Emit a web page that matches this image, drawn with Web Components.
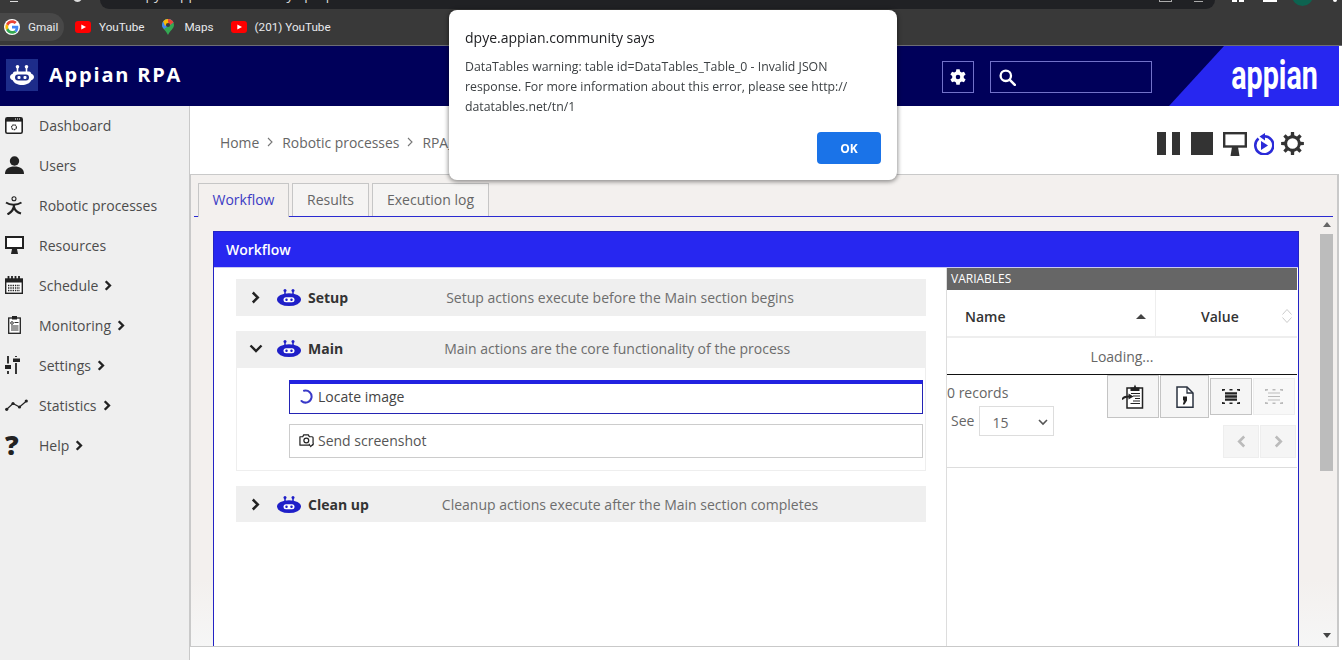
<!DOCTYPE html>
<html lang="en"><head><meta charset="utf-8"><title>Appian RPA</title>
<style>
html,body{margin:0;padding:0;height:660px;overflow:hidden;background:#fff;font-family:"Open Sans","Noto Sans",sans-serif}
</style></head><body>
<rpa-page>
  <browser-bar slot="chrome">
    <bm-item icon="google" active>Gmail</bm-item>
    <bm-item icon="yt">YouTube</bm-item>
    <bm-item icon="maps">Maps</bm-item>
    <bm-item icon="yt">(201) YouTube</bm-item>
  </browser-bar>
  <app-header slot="header"></app-header>
  <side-nav slot="nav">
    <nav-item icon="dash">Dashboard</nav-item>
    <nav-item icon="user">Users</nav-item>
    <nav-item icon="robotic">Robotic processes</nav-item>
    <nav-item icon="monitor">Resources</nav-item>
    <nav-item icon="calendar" more>Schedule</nav-item>
    <nav-item icon="clip" more>Monitoring</nav-item>
    <nav-item icon="sliders" more>Settings</nav-item>
    <nav-item icon="stats" more>Statistics</nav-item>
    <nav-item icon="help" more>Help</nav-item>
  </side-nav>
  <crumb-bar slot="crumbs"></crumb-bar>
  <work-area slot="work">
    <workflow-panel>
      <section-row title="Setup" desc="Setup actions execute before the Main section begins" gap="98"></section-row>
      <section-row title="Main" desc="Main actions are the core functionality of the process" gap="101" nudge open>
        <action-item icon="spinner" active>Locate image</action-item>
        <action-item icon="camera">Send screenshot</action-item>
      </section-row>
      <section-row title="Clean up" desc="Cleanup actions execute after the Main section completes" gap="73" short></section-row>
      <vars-panel slot="side"></vars-panel>
    </workflow-panel>
  </work-area>
</rpa-page>
<alert-dialog origin="dpye.appian.community says">DataTables warning: table id=DataTables_Table_0 - Invalid JSON response. For more information about this error, please see http:// datatables.net/tn/1</alert-dialog>
<script>
function gearPath(c,ro,ri,h,n,root,tip){root=root||.34;tip=tip||.2;let d='';const s=Math.PI*2/n;for(let i=0;i<n;i++){const a=i*s-Math.PI/2;const P=(r,t)=>(c+r*Math.cos(t)).toFixed(2)+' '+(c+r*Math.sin(t)).toFixed(2);
d+=(i?'L':'M')+P(ri,a-s*root)+'L'+P(ro,a-s*tip)+'L'+P(ro,a+s*tip)+'L'+P(ri,a+s*root);}
return d+`ZM${c-h} ${c}a${h} ${h} 0 1 0 ${2*h} 0a${h} ${h} 0 1 0 ${-2*h} 0Z`;}
const D='#222';
const ICONS={
dash:[18,17,'0 0 18 17',`<rect x=".8" y=".8" width="16.4" height="15.4" rx="1.5" fill="#fff" stroke="${D}" stroke-width="1.6"/><rect x="1" y="1" width="16" height="3.6" fill="${D}"/><path d="M10 2h1M12 2h1M14 2h1" stroke="#fff"/><circle cx="9" cy="10.2" r="2.4" fill="none" stroke="#333" stroke-width="1.3" stroke-dasharray="1.6 .5"/>`],
user:[19,18,'0 0 19 18',`<circle cx="9.5" cy="5" r="4.7" fill="${D}"/><path d="M0 18c0-5.5 4-7.5 9.5-7.5S19 12.5 19 18z" fill="${D}"/>`],
robotic:[17,19,'0 0 17 19',`<circle cx="9" cy="2.8" r="2" fill="none" stroke="${D}" stroke-width="1.1"/><path d="M1 6.5C5 9.5 12 9.5 16.5 6.5" fill="none" stroke="${D}" stroke-width="2"/><path d="M9 8.5C9.5 13 6.5 16 2.5 18.5M9 11C10 15 12.5 16.5 16 17.5" fill="none" stroke="${D}" stroke-width="2.2"/>`],
monitor:[19,18,'0 0 19 18',`<rect x="1" y="1" width="17" height="11" fill="#fff" stroke="${D}" stroke-width="2"/><path d="M7 13h5l1 5H6z" fill="${D}"/>`],
calendar:[18,18,'0 0 18 18',`<rect x=".7" y="3" width="16.6" height="14.3" fill="#fff" stroke="${D}" stroke-width="1.4"/><path d="M1 3h16v3.5H1z" fill="${D}"/><path d="M3.5 0v4M7 0v4M10.5 0v4M14 0v4" stroke="${D}" stroke-width="1.8"/><path d="M3 9.5h12M3 12h12M3 14.5h12" stroke="${D}" stroke-width="1.4" stroke-dasharray="1.4 .9"/>`],
clip:[13,18,'0 0 13 18',`<rect x=".7" y="2" width="11.6" height="15.3" fill="#fff" stroke="${D}" stroke-width="1.3"/><rect x="4" y="0" width="5" height="3.5" fill="${D}"/><circle cx="4" cy="7" r="1.3" fill="none" stroke="#333"/><path d="M6.5 6.5h4M3 10h7.5M3 12h7.5M3 14h7.5" stroke="#333"/>`],
sliders:[15,18,'0 0 15 18',`<path d="M3 0v7.5M3 15v3M11 0v1M11 7v11" stroke="${D}" stroke-width="1.8"/><rect x="0" y="9" width="6" height="4" fill="${D}"/><rect x="8" y="2.5" width="7" height="3.5" fill="${D}"/>`],
stats:[23,12,'0 0 23 12',`<path d="M1.5 10.5L8 4.5l6.5 3.500L21.5 2" fill="none" stroke="${D}" stroke-width="1.2"/><circle cx="1.7" cy="10.3" r="1.6" fill="${D}"/><circle cx="8" cy="4.5" r="1.6" fill="${D}"/><circle cx="14.5" cy="8" r="1.6" fill="${D}"/><circle cx="21.3" cy="2" r="1.6" fill="${D}"/>`],
gearw:[16,16,'0 0 24 24',`<path fill="#fff" fill-rule="evenodd" d="${gearPath(12,12,8.8,3.4,6)}"/>`],
search:[17,17,'0 0 17 17',`<circle cx="6.8" cy="6.8" r="5.2" fill="none" stroke="#fff" stroke-width="2.3"/><path d="M10.8 10.8l5 5" stroke="#fff" stroke-width="2.6" stroke-linecap="round"/>`],
pause:[23,23,'0 0 23 23',`<rect width="9" height="23" fill="#333"/><rect x="15" width="8" height="23" fill="#333"/>`],
stop:[22,23,'0 0 22 23',`<rect width="22" height="23" fill="#333"/>`],
monitorL:[24,24,'0 0 24 24',`<rect x="1.2" y="1.2" width="21.6" height="13.3" fill="#fff" stroke="#333" stroke-width="2.4"/><path d="M9 15h6l1.5 9h-9z" fill="#333"/>`],
replay:[21,22,'0 0 21 22',`<path d="M5.5 5.4A9 9 0 1 0 11 3.3" fill="none" stroke="#2a2ad8" stroke-width="2.6"/><path d="M12 0v7.5L6.5 3.500z" fill="#2a2ad8"/><path d="M8 8l7 4.5L8 17z" fill="#2a2ad8"/>`],
gearL:[23,23,'0 0 24 24',`<path fill="#333" fill-rule="evenodd" d="${gearPath(12,12,8.7,5.6,8,.27,.18)}"/>`],
botw:[24,20,'0 0 24 20',`<circle cx="7.5" cy="1.8" r="1.8" fill="#fff"/><circle cx="16.5" cy="1.8" r="1.8" fill="#fff"/><path d="M7.5 2v5M16.5 2v5" stroke="#fff" stroke-width="1.6"/><path d="M5 6.5h14c1.5 0 2 1.6 2.3 2.2 1.6.3 2.7 1.8 2.7 3.3s-1.1 3-2.7 3.3C20 18.5 16 20 12 20s-8-1.5-9.3-4.7C1.1 15 0 13.5 0 12s1.1-3 2.7-3.3C3 8.1 3.5 6.5 5 6.5z" fill="#fff"/><rect x="5" y="9.5" width="14" height="6" rx="3" fill="#1d2c8a"/><rect x="7.5" y="11" width="3" height="3" rx="1" fill="#fff"/><rect x="13.5" y="11" width="3" height="3" rx="1" fill="#fff"/>`],
bot:[24,17,'0 0 24 17',`<circle cx="8" cy="1.5" r="1.5" fill="#1f1fc8"/><circle cx="16" cy="1.5" r="1.5" fill="#1f1fc8"/><path d="M8 2v4M16 2v4" stroke="#1f1fc8" stroke-width="1.5"/><ellipse cx="12" cy="10.6" rx="12" ry="6.4" fill="#1f1fc8"/><rect x="6.5" y="8.3" width="11" height="5" rx="2.5" fill="#fff"/><rect x="8.3" y="9.6" width="2.4" height="2.4" rx="1" fill="#1f1fc8"/><rect x="13.3" y="9.6" width="2.4" height="2.4" rx="1" fill="#1f1fc8"/>`],
spinner:[15,15,'0 0 15 15',`<path d="M5 1.8A6 6 0 1 1 2.500 12" fill="none" stroke="#3838c8" stroke-width="2" stroke-linecap="round"/>`],
camera:[15,15,'0 0 16 15',`<path d="M1 3.5h3l1-2h5l1 2h3a1 1 0 0 1 1 1v7a1 1 0 0 1-1 1H1z" fill="#fff" stroke="#222" stroke-width="1.3" stroke-linejoin="round"/><circle cx="7.8" cy="7.5" r="2.6" fill="none" stroke="#222" stroke-width="1.3"/><path d="M10.5 11l2 3 3-3.500" fill="#fff" stroke="#222" stroke-width="1.1"/>`],
paste:[22,25,'0 0 22 25',`<rect x="5" y="4" width="15.5" height="20" fill="#fff" stroke="#222" stroke-width="1.5"/><path d="M8.5 7V3.500h3.200L13 .5l1.300 3h3.200V7z" fill="#222"/><path d="M9 9.5h9M11 12h7M13 14.5h5M11 17h7M8.500 19.500h9.500" stroke="#222" stroke-width="1.2"/><path d="M0 15.500c1-2 3-3 7-3" fill="none" stroke="#222" stroke-width="1.8"/><path d="M6.500 9.500l5 3-5 3z" fill="#222"/>`],
csv:[18,22,'0 0 18 22',`<path d="M1 1h10l6 6v14.300H1z" fill="#fff" stroke="#2b3340" stroke-width="1.5"/><path d="M11 1v6h6" fill="none" stroke="#2b3340" stroke-width="1.3"/><path d="M7 10.500h4v4L8.500 18.500H6.800l1.200-4H7z" fill="#222"/>`],
collapse:[18,15,'0 0 18 15',`<path d="M3 3.200h12v2.400H3zM3 6.300h12v2.400H3zM3 9.400h12v2.400H3z" fill="#222"/><path d="M0 .8h18M0 14.200h18" stroke="#222" stroke-width="1.6" stroke-dasharray="3 4.500"/><path d="M.8 0v15M17.200 0v15" stroke="#222" stroke-width="1.4" stroke-dasharray="2 11 2"/>`],
expand:[18,15,'0 0 18 15',`<path d="M3 3.500h12v1H3zM3 7h12v1H3zM3 10.500h12v1H3z" fill="#bbb"/><path d="M0 .8h18M0 14.200h18" stroke="#bbb" stroke-width="1.4" stroke-dasharray="3 4.500"/><path d="M.8 0v15M17.200 0v15" stroke="#bbb" stroke-width="1.4" stroke-dasharray="2 11 2"/>`],
chevR:[9,13,'0 0 9 13',`<path d="M1.800 1.500l5 5-5 5" fill="none" stroke="#222" stroke-width="2.5"/>`],
chevS:[8,11,'0 0 9 13',`<path d="M1.800 1.500l5 5-5 5" fill="none" stroke="#222" stroke-width="2.8"/>`],
chevD:[14,9,'0 0 14 9',`<path d="M1.500 1.500L7 7l5.500-5.500" fill="none" stroke="#222" stroke-width="2.4"/>`],
chevRg:[9,13,'0 0 9 13',`<path d="M1.800 1.500l5 5-5 5" fill="none" stroke="#bbb" stroke-width="2.6"/>`],
chevLg:[9,13,'0 0 9 13',`<path d="M7.200 1.500l-5 5 5 5" fill="none" stroke="#bbb" stroke-width="2.6"/>`],
google:[16,16,'0 0 48 48',`<circle cx="24" cy="24" r="24" fill="#fff"/><path fill="#ea4335" d="M24 12c3.200 0 6 1.100 8.200 3.200l5.900-5.900C34.400 5.800 29.600 4 24 4 16.200 4 9.500 8.500 6.200 15l6.900 5.300C14.700 15.500 19 12 24 12z"/><path fill="#4285f4" d="M43 24.500c0-1.400-.1-2.700-.4-4H24v7.700h10.700c-.5 2.500-1.900 4.600-4 6l6.700 5.200c3.900-3.600 5.600-8.900 5.600-14.900z"/><path fill="#fbbc05" d="M13.100 28.300c-.9-2.700-.9-5.500 0-8L6.200 15c-2.900 5.700-2.900 12.300 0 18z"/><path fill="#34a853" d="M24 44c5.400 0 9.900-1.800 13.400-4.600l-6.700-5.200c-1.800 1.200-4 1.900-6.700 1.900-5 0-9.300-3.500-10.900-8.100L6.200 33C9.500 39.500 16.200 44 24 44z"/>`],
yt:[16,12,'0 0 16 12',`<rect width="16" height="12" rx="3" fill="#f00"/><path d="M6.300 3.500L11 6 6.300 8.500z" fill="#fff"/>`],
maps:[12,16,'0 0 12 16',`<path d="M6 0a6 6 0 0 1 6 6c0 3.500-4 5.500-6 10C4 11.500 0 9.500 0 6a6 6 0 0 1 6-6z" fill="#34a853"/><path d="M6 0a6 6 0 0 1 5.500 3.500L2 10C1 8.800 0 7.600 0 6a6 6 0 0 1 6-6z" fill="#4285f4"/><path d="M1.200 2.400A6 6 0 0 1 6 0l1 4-4 3z" fill="#fbbc05"/><path d="M6 0a6 6 0 0 1 5.500 3.500L8 6 6 3z" fill="#ea4335"/><circle cx="6" cy="6" r="2.100" fill="#3a3a3a"/>`]
};
function svg(n){const i=ICONS[n];return i?`<svg width="${i[0]}" height="${i[1]}" viewBox="${i[2]}" aria-hidden="true">${i[3]}</svg>`:'';}
function def(name,css,html){customElements.define(name,class extends HTMLElement{constructor(){super();this.attachShadow({mode:'open'});}
connectedCallback(){if(this._r)return;this._r=1;const h=typeof html==='function'?html(this):html;this.shadowRoot.innerHTML=`<style>${css}</style>${h}`;}});}

def('rpa-page',`:host{display:flex;flex-direction:column;height:660px;width:1342px;overflow:hidden}
.body{display:flex;height:554px;padding-right:3px;box-sizing:border-box}
.nav{flex:none;width:190px}.main{flex:1;display:flex;flex-direction:column;min-width:0}`,
`<slot name="chrome"></slot><slot name="header"></slot><div class="body"><div class="nav"><slot name="nav"></slot></div><div class="main"><slot name="crumbs"></slot><slot name="work"></slot></div></div>`);

def('browser-bar',`:host{display:block;background:#393939;color:#e8eaed;border-bottom:1px solid #6d6d75;font:11.7px Roboto,sans-serif}
.top{height:9px;position:relative;overflow:hidden;display:flex;padding-left:100px}
.url{width:1115px;height:9px;background:#202124;border-radius:0 0 12px 12px;overflow:hidden;box-sizing:border-box;padding-left:37px;color:#ddd;font:13.5px/16px "Open Sans",sans-serif}
.url span{display:block;margin-top:-13px;white-space:nowrap;letter-spacing:.2px}
.tools{position:absolute;top:0;left:0;right:0;height:9px}
.tools i{position:absolute;display:block}
.bm{height:36px;display:flex;align-items:center;gap:17px;box-sizing:border-box}`,
`<div class="top"><div class="url"><span>dpye.appian.community/rpa/p/</span></div><div class="tools">
<i style="left:10px;top:-3px;width:8px;height:4px;border-bottom:1px solid #ddd"></i>
<i style="left:72px;top:-11px;width:11px;height:13px;background:#ddd;border-radius:50%"></i>
<i style="left:1159px;top:-6px;width:11px;height:7px;border:1px solid #aaa;border-top:0"></i>
<i style="left:1194px;top:-3px;width:9px;height:4px;border-bottom:1px solid #aaa"></i>
<i style="left:1232px;top:-6px;width:5px;height:8px;background:#fff"></i><i style="left:1239px;top:-6px;width:5px;height:8px;background:#fff"></i>
<i style="left:1263px;top:-6px;width:14px;height:8px;background:#fff"></i>
<i style="left:1292px;top:-15px;width:21px;height:21px;background:#0d6350;border-radius:50%"></i>
<i style="left:1333px;top:-2px;width:4px;height:4px;background:#fff;border-radius:50%"></i>
</div></div><div class="bm"><slot></slot></div>`);

def('bm-item',`:host{display:flex;align-items:center;height:28px;gap:8px;white-space:nowrap}
:host([active]){background:#484848;box-sizing:border-box;width:64px;padding-left:4px;border-radius:0 14px 14px 0;margin-right:-6px}
:host([icon=maps]){gap:10px;margin-left:1px}
svg{display:block;flex:none}`,
h=>`${svg(h.getAttribute('icon'))}<slot></slot>`);

def('app-header',`:host{display:flex;align-items:stretch;height:60px;margin-right:3px;background:#00005a;color:#fff}
.logo{flex:none;display:flex;align-items:center;justify-content:center;width:32px;height:32px;margin:13px 0 0 6px;background:#1d2c8a}
.brand{flex:none;margin-left:11px;font:700 20px/58px "Open Sans",sans-serif;letter-spacing:1.8px;white-space:nowrap}
.sp{flex:1}
.box{flex:none;display:flex;align-items:center;box-sizing:border-box;height:32px;margin-top:15px;border:1px solid #7171c9}
.gear{width:32px;justify-content:center}.search{width:162px;margin-left:16px;padding-left:8px}
.brandblock{flex:none;margin-left:17px;width:170px;background:#2727f0;clip-path:polygon(55px 0,100% 0,100% 100%,0 100%);overflow:hidden;display:flex;justify-content:flex-end}
.ap{font:700 41px/58px Roboto,sans-serif;transform:scaleX(.7);transform-origin:100% 50%;margin-right:21px;white-space:nowrap}`,
`<div class="logo">${svg('botw')}</div><div class="brand">Appian RPA</div><div class="sp"></div>
<div class="box gear">${svg('gearw')}</div><div class="box search">${svg('search')}</div>
<div class="brandblock"><span class="ap">appian</span></div>`);

def('side-nav',`:host{display:block;height:100%;box-sizing:border-box;width:190px;background:#efefef;border-right:1px solid #c9c9c9}`,`<slot></slot>`);

def('nav-item',`:host{display:flex;align-items:center;box-sizing:border-box;height:40px;padding-bottom:2px;font:14px "Open Sans",sans-serif;color:#4c4c4c;white-space:nowrap}
.ic{flex:none;width:34px;margin-left:5px;display:flex;align-items:center}
.ic.c{padding-left:3px;width:31px}.more{display:flex;margin-left:6px}
.q{font:800 27px/1 "Open Sans",sans-serif;color:#222;margin-top:-1px}`,
h=>{const n=h.getAttribute('icon');return `<span class="ic ${n==='clip'?'c':''}">${n==='help'?'<span class="q">?</span>':svg(n)}</span><slot></slot>${h.hasAttribute('more')?`<span class="more">${svg('chevS')}</span>`:''}`;});

def('crumb-bar',`:host{display:flex;align-items:center;flex:none;height:68px;padding:4px 0 0 30px;box-sizing:border-box;font:13.9px "Open Sans",sans-serif;color:#666}
.sep{margin:0 8px;display:flex}.sp{flex:1}.tools{display:flex;align-items:center;margin-right:35px;margin-top:3px}
.tools svg{display:block}`,
`<span>Home</span><span class="sep"><svg width="7" height="10" viewBox="0 0 7 10"><path d="M1 1l4 4-4 4" fill="none" stroke="#777" stroke-width="1.1"/></svg></span><span>Robotic processes</span><span class="sep"><svg width="7" height="10" viewBox="0 0 7 10"><path d="M1 1l4 4-4 4" fill="none" stroke="#777" stroke-width="1.1"/></svg></span><span>RPA_</span><span class="sp"></span>
<div class="tools">${svg('pause')}<span style="width:11px"></span>${svg('stop')}<span style="width:10px"></span>${svg('monitorL')}<span style="width:6px"></span>${svg('replay')}<span style="width:7px"></span>${svg('gearL')}</div>`);

const tab=`display:flex;align-items:center;justify-content:center;box-sizing:border-box;height:33px;padding-bottom:2px;border:1px solid #c6c6c6;border-bottom:0;background:#f5f4f3;color:#666;font:14px "Open Sans",sans-serif`;
def('work-area',`:host{display:flex;flex-direction:column;box-sizing:border-box;height:473px;flex:none;border:1px solid #c9c9c9;border-right-width:2px;overflow:hidden;background:linear-gradient(#f3f0ee 86%,#f6f6f6)}
.tabs{display:flex;flex:none;gap:3px;margin:8px 4px 0 3px;padding-left:4px;border-bottom:1px solid #2a2ad0;height:33px}
.t{${tab}}.t.on{background:#f3f0ee;color:#3b3bc4;height:34px;position:relative;z-index:1}
.row{flex:1;display:flex;min-height:0}
.wf{flex:none;width:1086px;margin:14px 0 0 22px}
.sb{flex:none;width:13px;margin:0 0 0 21px;display:flex;flex-direction:column;align-items:center}
.up{margin-top:5px;width:0;height:0;border:4.5px solid transparent;border-top:0;border-bottom:5px solid #666}
.th{width:13px;height:237px;margin-top:7px;background:#bcbcbc;flex:none}
.sp{flex:1}.dn{margin-bottom:8px;width:0;height:0;border:4.5px solid transparent;border-bottom:0;border-top:5px solid #444}`,
`<div class="tabs"><div class="t on" style="width:91px">Workflow</div><div class="t" style="width:77px">Results</div><div class="t" style="width:117px">Execution log</div></div>
<div class="row"><div class="wf"><slot></slot></div><div class="sb"><i class="up"></i><i class="th"></i><i class="sp"></i><i class="dn"></i></div></div>`);

def('workflow-panel',`:host{display:flex;flex-direction:column;height:100%;box-sizing:border-box;border:1px solid #2323c4;border-bottom:0;background:#fff}
.hd{flex:none;height:35px;background:#2727f0;color:#fff;font:600 14px/35px "Open Sans",sans-serif;padding-left:12px;border-bottom:1px solid #c9c9f2}
.b{flex:1;display:flex;min-height:0}
.l{flex:none;width:732px;box-sizing:border-box;padding:11px 20px 0 22px;display:flex;flex-direction:column;gap:15px}
.r{flex:1;min-width:0;border-left:1px solid #ddd;margin-right:1px}`,
`<div class="hd">Workflow</div><div class="b"><div class="l"><slot></slot></div><div class="r"><slot name="side"></slot></div></div>`);

def('section-row',`:host{display:block;font-family:"Open Sans",sans-serif}
.h{display:flex;align-items:center;box-sizing:border-box;height:37px;background:#efefef;padding-left:15px;white-space:nowrap}
:host([nudge]) .h{padding-bottom:2px}
:host([short]) .h{height:36px}
.c{flex:none;width:26px;display:flex}.c.d{margin-left:-2px;width:28px}
.bot{display:flex;flex:none;width:31px}
.t{font:700 14px "Open Sans",sans-serif;color:#333}
.d2{font-size:14px;color:#6d6d6d}
.k{border:1px solid #eee;border-top:0;padding:12px 2px 12px 52px;display:flex;flex-direction:column;gap:10px}`,
h=>{const o=h.hasAttribute('open');return `<div class="h"><span class="c ${o?'d':''}">${svg(o?'chevD':'chevR')}</span><span class="bot">${svg('bot')}</span><span class="t">${h.getAttribute('title')}</span><span class="d2" style="margin-left:${h.getAttribute('gap')}px">${h.getAttribute('desc')}</span></div>${o?'<div class="k"><slot></slot></div>':''}`;});

def('action-item',`:host{display:flex;align-items:center;box-sizing:border-box;height:34px;border:1px solid #ccc;padding:0 0 2px 9px;gap:4px;font:14px "Open Sans",sans-serif;color:#555;white-space:nowrap}
:host([active]){border:1px solid #2424b4;border-top:4px solid #2222e0;color:#444;padding-bottom:4px}
svg{flex:none}`,h=>`${svg(h.getAttribute('icon'))}<slot></slot>`);

def('vars-panel',`:host{display:block;font-family:"Open Sans",sans-serif;font-size:14px;color:#555}
.cap{height:22px;background:#666;color:#fff;font:12px/22px "Open Sans",sans-serif;padding-left:4px}
.th{display:flex;height:48px;border-bottom:2px solid #eee;box-sizing:border-box;font-weight:600;color:#333;align-items:center}
.n{width:209px;height:100%;box-sizing:border-box;padding:6px 9px 0 18px;display:flex;align-items:center;justify-content:space-between;border-right:1px solid #eee}
.tri{width:0;height:0;border:5px solid transparent;border-top:0;border-bottom:5px solid #444}
.v{flex:1;display:flex;align-items:center;justify-content:space-between;padding:6px 4px 0 45px}
.v svg{display:block}
.load{height:36px;border-bottom:1px solid #111;display:flex;align-items:center;justify-content:center;color:#666}
.foot{display:flex;justify-content:space-between;height:92px;border-bottom:1px solid #ddd}
.rec{padding-top:8px;color:#666;line-height:19px}
.see{display:flex;align-items:center;margin-top:4px;padding-left:4px;gap:5px}
.see>span{margin-top:-2px}
.sel{display:flex;align-items:center;justify-content:space-between;box-sizing:border-box;width:75px;height:30px;border:1px solid #ddd;padding:2px 5px 0 12px;background:#fff}
.acts{display:flex;flex-direction:column;align-items:flex-end;padding-right:2px}
.btns{display:flex;align-items:flex-start;gap:1px}
.b{display:flex;align-items:center;justify-content:center;box-sizing:border-box;background:#f5f5f5;border:1px solid #c4c4c4}
.pg{display:flex;gap:1px;margin-top:7px;margin-right:-1px}
.p{width:36px;height:33px;background:#f5f5f5;border:1px solid #eee;box-sizing:border-box;display:flex;align-items:center;justify-content:center}`,
`<div class="cap">VARIABLES</div>
<div class="th"><div class="n"><span>Name</span><i class="tri"></i></div><div class="v"><span>Value</span><svg width="12" height="16" viewBox="0 0 12 16"><path d="M1.5 6.5L6 1.5l4.5 5M1.5 9.5L6 14.5l4.5-5" fill="none" stroke="#ccc"/></svg></div></div>
<div class="load">Loading...</div>
<div class="foot"><div class="rec"><div>0 records</div><div class="see"><span>See</span><div class="sel"><span>15</span><svg width="10" height="7" viewBox="0 0 10 7"><path d="M1 1l4 4 4-4" fill="none" stroke="#555" stroke-width="1.6"/></svg></div></div></div>
<div class="acts"><div class="btns">
<div class="b" style="width:52px;height:43px">${svg('paste')}</div><div class="b" style="width:49px;height:43px">${svg('csv')}</div>
<div class="b" style="width:42px;height:37px;margin-top:3px">${svg('collapse')}</div><div class="b" style="width:42px;height:37px;margin-top:3px;border-color:#eee;background:#f8f8f8">${svg('expand')}</div></div>
<div class="pg"><div class="p">${svg('chevLg')}</div><div class="p">${svg('chevRg')}</div></div></div></div>`);

def('alert-dialog',`:host{position:fixed;left:449px;top:10px;width:448px;height:170px;box-sizing:border-box;background:#fff;border-radius:8px;box-shadow:0 1px 4px 1px rgba(0,0,0,.4);padding:17px 16px 16px;font-family:"Open Sans",sans-serif;color:#3c4043;display:flex;flex-direction:column}
.t{font-size:14px;line-height:22px;color:#202124}
.m{font-size:12.3px;line-height:20px;margin-top:8px;flex:1}
.a{display:flex;justify-content:flex-end}
button{width:64px;height:32px;border:0;border-radius:4px;background:#1a73e8;color:#fff;font:700 12px "Open Sans",sans-serif;padding:0}`,
h=>`<div class="t">${h.getAttribute('origin')}</div><div class="m"><slot></slot></div><div class="a"><button>OK</button></div>`);
</script>
</body></html>
